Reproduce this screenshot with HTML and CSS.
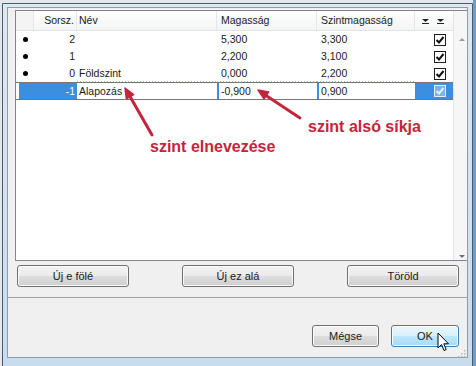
FILE: index.html
```html
<!DOCTYPE html>
<html>
<head>
<meta charset="utf-8">
<link rel="stylesheet" href="styles.css">
</head>
<body>
<div class="window">
  <div class="client">
    <div class="list">
      <div class="grid">
        <div class="hdr">
          <div class="h c0"></div>
          <div class="h c1">Sorsz.</div>
          <div class="h c2">Név</div>
          <div class="h c3">Magasság</div>
          <div class="h c4">Szintmagasság</div>
          <div class="h c5">
            <svg class="flt" width="23" height="6" viewBox="0 0 23 6"><polygon points="0,0 7,0 3.5,3" fill="#222"/><polygon points="15,0 22,0 18.5,3" fill="#222"/><rect x="0" y="4" width="7" height="1" fill="#222"/><rect x="15" y="4" width="7" height="1" fill="#222"/></svg>
          </div>
        </div>
        <div class="row">
          <div class="c0"><span class="dot"></span></div>
          <div class="c1">2</div>
          <div class="c2"></div>
          <div class="c3">5,300</div>
          <div class="c4">3,300</div>
          <div class="c5"><span class="chk"><svg width="10" height="10" viewBox="0 0 10 10"><path d="M1.5 5 L4 7.5 L8.5 2" fill="none" stroke="#111" stroke-width="2"/></svg></span></div>
        </div>
        <div class="row">
          <div class="c0"><span class="dot"></span></div>
          <div class="c1">1</div>
          <div class="c2"></div>
          <div class="c3">2,200</div>
          <div class="c4">3,100</div>
          <div class="c5"><span class="chk"><svg width="10" height="10" viewBox="0 0 10 10"><path d="M1.5 5 L4 7.5 L8.5 2" fill="none" stroke="#111" stroke-width="2"/></svg></span></div>
        </div>
        <div class="row dotted">
          <div class="c0"><span class="dot"></span></div>
          <div class="c1">0</div>
          <div class="c2">Földszint</div>
          <div class="c3">0,000</div>
          <div class="c4">2,200</div>
          <div class="c5"><span class="chk"><svg width="10" height="10" viewBox="0 0 10 10"><path d="M1.5 5 L4 7.5 L8.5 2" fill="none" stroke="#111" stroke-width="2"/></svg></span></div>
        </div>
        <div class="row sel">
          <div class="c0"></div>
          <div class="c1">-1</div>
          <div class="c2">Alapozás</div>
          <div class="c3">-0,900</div>
          <div class="c4">0,900</div>
          <div class="c5"><span class="chk"><svg width="10" height="10" viewBox="0 0 10 10"><path d="M1.5 5 L4 7.5 L8.5 2" fill="none" stroke="#e4f1fc" stroke-width="2"/></svg></span></div>
        </div>
      </div>
      <div class="scroll"><span class="up"></span><span class="dn"></span></div>
    </div>
    <div class="btns">
      <div class="btn">Új e fölé</div>
      <div class="btn">Új ez alá</div>
      <div class="btn">Töröld</div>
    </div>
    <div class="sep"></div>
    <div class="foot">
      <div class="btn small">Mégse</div>
      <div class="btn small ok">OK</div>
    </div>
  </div>
</div>

<svg class="arrows" width="476" height="366" viewBox="0 0 476 366">
  <line x1="130" y1="96.5" x2="152" y2="135" stroke="#c4253b" stroke-width="3" stroke-linecap="round"/>
  <polygon points="125,88 133.6,94.6 126.4,98.8" fill="#c4253b" stroke="#c4253b" stroke-width="1.5" stroke-linejoin="round"/>
  <line x1="266" y1="95.5" x2="300" y2="118" stroke="#c4253b" stroke-width="3" stroke-linecap="round"/>
  <polygon points="258,90 268.6,92.1 264,98.9" fill="#c4253b" stroke="#c4253b" stroke-width="1.5" stroke-linejoin="round"/>
</svg>
<div class="note n1">szint elnevezése</div>
<div class="note n2">szint alsó síkja</div>

<svg class="grip" width="9" height="9" viewBox="0 0 9 9">
  <rect x="7" y="1" width="1.5" height="1.5" fill="#b8b8b8"/>
  <rect x="4" y="4" width="1.5" height="1.5" fill="#b8b8b8"/>
  <rect x="7" y="4" width="1.5" height="1.5" fill="#b8b8b8"/>
  <rect x="1" y="7" width="1.5" height="1.5" fill="#b8b8b8"/>
  <rect x="4" y="7" width="1.5" height="1.5" fill="#b8b8b8"/>
  <rect x="7" y="7" width="1.5" height="1.5" fill="#b8b8b8"/>
</svg>
<svg class="cursor" width="14" height="21" viewBox="0 0 14 21">
  <path d="M1 1 L1 16 L4.5 12.5 L7 18.5 L9.2 17.5 L6.8 11.8 L11.5 11.8 Z" fill="#fff" stroke="#000" stroke-width="1" stroke-linejoin="miter"/>
</svg>
</body>
</html>
```

FILE: styles.css
```css
* { box-sizing: border-box; margin: 0; padding: 0; }
html, body { width: 476px; height: 366px; overflow: hidden; }
body {
  position: relative;
  background: linear-gradient(to right, #e4e8ec 0, #e4e8ec 473px, #6d9ccb 473px);
  font-family: "Liberation Sans", Arial, sans-serif;
  font-size: 10.5px;
  color: #1a1a1a;
}
.window {
  margin: 3px 0 0 2px;
  width: 471px;
  height: 380px;
  border: 1px solid #4a5b6c;
  border-radius: 0 0 0 6px;
  background: linear-gradient(to bottom, #dfe8f0, #c6dcee);
  padding: 3px 4px 4px 4px;
}
.client {
  height: 351px;
  border: 1px solid #8d9cad;
  background: #f0f0f0;
  display: flex;
  flex-direction: column;
  position: relative;
}
.list {
  margin: 2px 0 0 7px;
  height: 251px;
  border: 1px solid #82878f;
  border-right: 0;
  background: #fff;
  display: flex;
}
.grid { flex: 1; display: flex; flex-direction: column; }
.hdr, .row {
  display: grid;
  grid-template-columns: 18px 43px 140px 100px 98px 38px;
}
.hdr {
  height: 20px;
  border-bottom: 1px solid #e2e3e5;
  background: linear-gradient(#ffffff, #f3f4f5);
}
.h { line-height: 19px; white-space: nowrap; border-right: 1px solid #e6e6e6; }
.h.c0 { background: #f4f4f4; }
.h.c5 { border-right: 0; display: flex; align-items: flex-start; }
.flt { margin: 8px 0 0 7px; }
.row { height: 17px; line-height: 17px; }
.row > div { white-space: nowrap; overflow: hidden; }
.c1 { text-align: right; padding-right: 2px; }
.c2 { padding-left: 2px; }
.c3, .c4 { padding-left: 4px; }
.row .c0 { display: flex; align-items: center; }
.dot { width: 5px; height: 5px; border-radius: 50%; background: #000; margin-left: 7px; }
.row .c5 { display: flex; align-items: center; }
.chk {
  width: 12px; height: 12px;
  margin-left: 19px;
  border: 1px solid #1e1e1e;
  background: #fff;
  display: flex; align-items: center; justify-content: center;
}
.dotted .c2, .dotted .c3, .dotted .c4 {
  background: repeating-linear-gradient(to right, #9ccc9c 0 1px, transparent 1px 3px) left bottom / 100% 1px no-repeat;
}
.row.sel {
  height: 18px;
  line-height: 16px;
  border-top: 1px solid #767676;
  border-bottom: 1px solid #767676;
}
.sel .c0 { background: linear-gradient(to right, #fff 3px, #3b8ee0 3px); }
.sel .c1 { background: #3b8ee0; color: #fff; }
.sel .c3, .sel .c4 { border-left: 2px solid #3b8ee0; padding-left: 2px; }
.sel .c5 { background: #3b8ee0; }
.sel .chk { border-color: #e4f1fc; background: #79b3ea; }
.scroll {
  width: 14px;
  background: #f6f6f6;
  border-left: 1px solid #e4e4e4;
  display: flex;
  flex-direction: column;
  justify-content: space-between;
  align-items: center;
  padding: 27px 0 2px 3px;
}
.up { width: 0; height: 0; border-left: 3px solid transparent; border-right: 3px solid transparent; border-bottom: 3px solid #9a9a9a; }
.dn { width: 0; height: 0; border-left: 3px solid transparent; border-right: 3px solid transparent; border-top: 3px solid #707070; }
.btns {
  display: flex;
  justify-content: space-between;
  margin: 4px 8px 0 9px;
}
.btn {
  width: 112px;
  height: 22px;
  border: 1px solid #707070;
  border-radius: 3px;
  background: linear-gradient(#f3f3f3 0%, #ebebeb 48%, #dddddd 52%, #cfcfcf 100%);
  box-shadow: inset 0 0 0 1px #fbfbfb;
  text-align: center;
  line-height: 20px;
  font-size: 11px;
  color: #1a1a1a;
}
.sep { margin-top: 10px; height: 1px; background: #a2a2a2; }
.foot {
  display: flex;
  justify-content: flex-end;
  gap: 12px;
  margin: 27px 8px 0 0;
}
.btn.small { width: 67px; }
.btn.ok {
  width: 68px;
  border-color: #3c7fb1;
  background: linear-gradient(#eaf6fd 0%, #d9f0fc 48%, #bee6fd 52%, #a7d9f5 100%);
}
.arrows { position: absolute; left: 0; top: 0; }
.note {
  position: absolute;
  font-family: "Liberation Sans", Arial, sans-serif;
  font-weight: bold;
  font-size: 16px;
  line-height: 18px;
  color: #c4253b;
  white-space: nowrap;
}
.n1 { left: 150px; top: 138px; }
.n2 { left: 308px; top: 118px; }
.grip { position: absolute; left: 457px; top: 349px; }
.cursor { position: absolute; left: 437px; top: 332px; }
```
